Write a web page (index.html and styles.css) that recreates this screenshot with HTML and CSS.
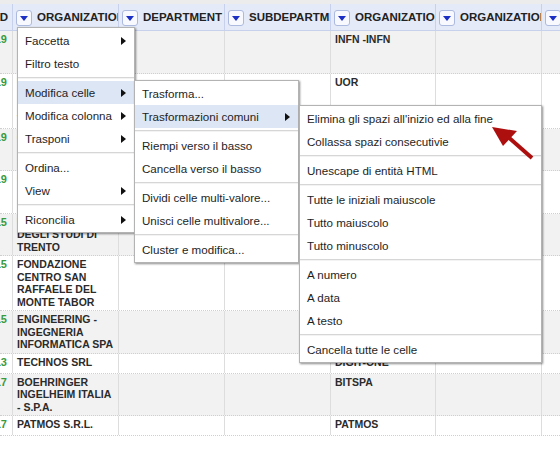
FILE: index.html
```html
<!DOCTYPE html>
<html lang="it">
<head>
<meta charset="utf-8">
<title>OpenRefine - Trasformazioni comuni</title>
<link rel="stylesheet" href="styles.css">
</head>
<body>
<div class="topbar"></div>
<div class="table">
  <div class="hrow">
    <div class="hcell first">ID</div>
    <div class="hcell"><span class="btn"></span>ORGANIZATION</div>
    <div class="hcell"><span class="btn"></span>DEPARTMENT</div>
    <div class="hcell"><span class="btn"></span>SUBDEPARTMENT</div>
    <div class="hcell"><span class="btn"></span>ORGANIZATION</div>
    <div class="hcell"><span class="btn"></span>ORGANIZATION</div>
    <div class="hcell"><span class="btn"></span>ORGANIZATION</div>
  </div>

  <div class="row odd">
    <div class="n"><span>2019</span></div>
    <div class="c">ISTITUTO<br>NAZIONALE DI<br>FISICA NUCLEARE</div>
    <div class="c"></div><div class="c"></div>
    <div class="c">INFN -INFN</div>
    <div class="c"></div><div class="c"></div>
  </div>
  <div class="row">
    <div class="n"><span>2019</span></div>
    <div class="c">UNIVERSITA'<br>DEGLI STUDI DI<br>ROMA TOR<br>VERGATA</div>
    <div class="c"></div><div class="c"></div>
    <div class="c">UOR</div>
    <div class="c"></div><div class="c"></div>
  </div>
  <div class="row odd">
    <div class="n"><span>2019</span></div>
    <div class="c">CONSIGLIO<br>NAZIONALE<br>DELLE RICERCHE</div>
    <div class="c"></div><div class="c"></div>
    <div class="c">CNR</div>
    <div class="c"></div><div class="c"></div>
  </div>
  <div class="row">
    <div class="n"><span>2019</span></div>
    <div class="c">UNIVERSITA'<br>DEGLI STUDI DI<br>PADOVA</div>
    <div class="c"></div><div class="c"></div>
    <div class="c">UNIPD</div>
    <div class="c"></div><div class="c"></div>
  </div>
  <div class="row odd">
    <div class="n"><span>2015</span></div>
    <div class="c">UNIVERSITA'<br>DEGLI STUDI DI<br>TRENTO</div>
    <div class="c"></div><div class="c"></div>
    <div class="c">UNITN</div>
    <div class="c"></div><div class="c"></div>
  </div>
  <div class="row">
    <div class="n"><span>2015</span></div>
    <div class="c">FONDAZIONE<br>CENTRO SAN<br>RAFFAELE DEL<br>MONTE TABOR</div>
    <div class="c"></div><div class="c"></div>
    <div class="c">OSR</div>
    <div class="c"></div><div class="c"></div>
  </div>
  <div class="row odd">
    <div class="n"><span>2015</span></div>
    <div class="c">ENGINEERING -<br>INGEGNERIA<br>INFORMATICA SPA</div>
    <div class="c"></div><div class="c"></div>
    <div class="c">ENG</div>
    <div class="c"></div><div class="c"></div>
  </div>
  <div class="row">
    <div class="n"><span>2013</span></div>
    <div class="c">TECHNOS SRL</div>
    <div class="c"></div><div class="c"></div>
    <div class="c">DIGIT-ONE</div>
    <div class="c"></div><div class="c"></div>
  </div>
  <div class="row odd">
    <div class="n"><span>2017</span></div>
    <div class="c">BOEHRINGER<br>INGELHEIM ITALIA<br>- S.P.A.</div>
    <div class="c"></div><div class="c"></div>
    <div class="c">BITSPA</div>
    <div class="c"></div><div class="c"></div>
  </div>
  <div class="row">
    <div class="n"><span>2017</span></div>
    <div class="c">PATMOS S.R.L.</div>
    <div class="c"></div><div class="c"></div>
    <div class="c">PATMOS</div>
    <div class="c"></div><div class="c"></div>
  </div>
</div>

<div class="menu m1">
  <div class="item sub">Faccetta</div>
  <div class="item">Filtro testo</div>
  <div class="sep"></div>
  <div class="item sub on">Modifica celle</div>
  <div class="item sub">Modifica colonna</div>
  <div class="item sub">Trasponi</div>
  <div class="sep"></div>
  <div class="item">Ordina...</div>
  <div class="item sub">View</div>
  <div class="sep"></div>
  <div class="item sub">Riconcilia</div>
</div>

<div class="menu m2">
  <div class="item">Trasforma...</div>
  <div class="item sub on">Trasformazioni comuni</div>
  <div class="sep"></div>
  <div class="item">Riempi verso il basso</div>
  <div class="item">Cancella verso il basso</div>
  <div class="sep"></div>
  <div class="item">Dividi celle multi-valore...</div>
  <div class="item">Unisci celle multivalore...</div>
  <div class="sep"></div>
  <div class="item">Cluster e modifica...</div>
</div>

<div class="menu m3">
  <div class="item">Elimina gli spazi all'inizio ed alla fine</div>
  <div class="item">Collassa spazi consecutivie</div>
  <div class="sep"></div>
  <div class="item">Unescape di entità HTML</div>
  <div class="sep"></div>
  <div class="item">Tutte le iniziali maiuscole</div>
  <div class="item">Tutto maiuscolo</div>
  <div class="item">Tutto minuscolo</div>
  <div class="sep"></div>
  <div class="item">A numero</div>
  <div class="item">A data</div>
  <div class="item">A testo</div>
  <div class="sep"></div>
  <div class="item">Cancella tutte le celle</div>
</div>

<svg class="pointer" width="60" height="55" viewBox="0 0 60 55" aria-hidden="true">
  <line x1="27" y1="21" x2="52" y2="43" stroke="#ad0f0f" stroke-width="4"/>
  <polygon points="12,12 37,16 23,31" fill="#ad0f0f"/>
</svg>
</body>
</html>
```

FILE: styles.css
```css
html, body {
  margin: 0;
  padding: 0;
  overflow: hidden;
}
body {
  position: relative;
  width: 560px;
  height: 458px;
  background: #ffffff;
  font-family: "Liberation Sans", Arial, sans-serif;
}

.topbar {
  height: 4px;
  background: #ececec;
}

.table {
  width: 760px;
}

.hrow,
.row {
  display: grid;
  grid-template-columns: 13px 106px 106px 106px 105px 106px 218px;
  box-sizing: border-box;
}

.hrow {
  height: 27px;
  background: #e4eaf8;
  border-bottom: 1px solid #c7d1eb;
}

.hcell {
  display: flex;
  align-items: center;
  gap: 5px;
  padding-left: 3px;
  border-right: 1px solid #c7d1eb;
  overflow: hidden;
  white-space: nowrap;
  font-size: 11.5px;
  font-weight: bold;
  color: #222;
}
.hcell.first {
  justify-content: flex-end;
  padding: 0 4px 0 0;
}

.btn {
  flex: none;
  width: 16px;
  height: 16px;
  margin-top: 1px;
  box-sizing: border-box;
  border: 1px solid #adbadf;
  border-radius: 3px;
  background: #f7f9fe;
  display: flex;
  align-items: center;
  justify-content: center;
}
.btn::after {
  content: "";
  border-left: 4px solid transparent;
  border-right: 4px solid transparent;
  border-top: 5px solid #1b2fc4;
  margin-top: 1px;
}

.row {
  min-height: 20px;
  border-bottom: 1px dotted #cfcfcf;
  background: #ffffff;
}
.row.odd {
  background: #f2f2f2;
}

.c {
  padding: 2px 4px;
  border-right: 1px solid #dddddd;
  font-size: 10.5px;
  font-weight: bold;
  line-height: 12.5px;
  color: #2b2b2b;
  white-space: nowrap;
  overflow: hidden;
}

.n {
  display: flex;
  justify-content: flex-end;
  align-items: flex-start;
  padding: 2px 5px 0 0;
  border-right: 1px solid #dddddd;
  overflow: hidden;
  white-space: nowrap;
  font-size: 11px;
  font-weight: bold;
  line-height: 12.5px;
  color: #3a9a3a;
}

.menu {
  position: absolute;
  box-sizing: border-box;
  padding: 1px 0;
  background: #ffffff;
  border: 1px solid #b3b3b3;
  box-shadow: 1px 1px 2px rgba(0, 0, 0, 0.45);
  font-size: 11.6px;
  color: #1e1e1e;
}
.m1 { left: 17px; top: 27px; width: 118px; }
.m2 { left: 134px; top: 80px; width: 165px; }
.m3 { left: 299px; top: 105px; width: 243px; }

.item {
  height: 23px;
  display: flex;
  align-items: center;
  padding-left: 7px;
  white-space: nowrap;
}
.item.on {
  background: #dce6f5;
}
.item.sub::after {
  content: "";
  margin-left: auto;
  margin-right: 8px;
  border-left: 5px solid #111;
  border-top: 4px solid transparent;
  border-bottom: 4px solid transparent;
}

.sep {
  margin: 2px 0;
  border-top: 1px solid #d6d6d6;
  border-bottom: 1px solid #f3f3f3;
}

.pointer {
  position: absolute;
  left: 480px;
  top: 115px;
}
```
